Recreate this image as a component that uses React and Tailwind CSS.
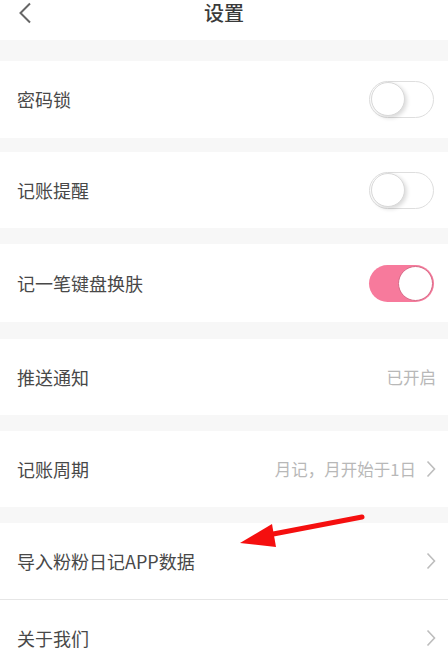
import React from 'react';

const font = { fontFamily: '"Noto Sans CJK SC", "Noto Sans", sans-serif' };

function Toggle({ on }) {
  if (on) {
    return (
      <div className="w-[65px] h-[37px] rounded-full bg-[#f77a9c] relative mr-[2px]">
        <div className="absolute right-[1px] top-[1px] w-[35px] h-[35px] rounded-full bg-white border border-[#d66a87]" />
      </div>
    );
  }
  return (
    <div className="w-[65px] h-[37px] rounded-full bg-white border border-[#dedede] relative mr-[2px]">
      <div className="absolute left-[1px] top-[0px] w-[34px] h-[34px] rounded-full bg-white border border-[#d9d9d9] shadow-[2px_2px_4px_rgba(0,0,0,0.15)]" />
    </div>
  );
}

function Chevron() {
  return (
    <svg width="10" height="18" viewBox="0 0 10 18" className="ml-[10px]">
      <path d="M1.5 1.5 L8.5 9 L1.5 16.5" fill="none" stroke="#bdbdbd" strokeWidth="1.6" />
    </svg>
  );
}

function Row({ label, right, h, border }) {
  return (
    <div className={`flex items-center justify-between bg-white pl-[17px] pr-[12px] ${h} ${border ? 'border-b border-[#e6e6e6]' : ''}`}>
      <span className="text-[18px] text-[#484848]">{label}</span>
      <div className="flex items-center">{right}</div>
    </div>
  );
}

const Gap = ({ h }) => <div className={`bg-[#f7f7f7] ${h}`} />;

export default function App() {
  return (
    <div className="w-[448px] h-[670px] overflow-hidden bg-white relative" style={font}>
      <div className="h-[40px] bg-white relative pt-[1px]">
        <svg width="14" height="22" viewBox="0 0 14 22" className="absolute left-[18px] top-[2px]">
          <path d="M12 1.5 L2.5 11 L12 20.5" fill="none" stroke="#666" strokeWidth="2" />
        </svg>
        <div className="text-center text-[20px] leading-[24px] font-medium text-[#3a3a3a]">设置</div>
      </div>
      <Gap h="h-[21px]" />
      <Row label="密码锁" h="h-[77px]" right={<Toggle />} />
      <Gap h="h-[14px]" />
      <Row label="记账提醒" h="h-[76px]" right={<Toggle />} />
      <Gap h="h-[16px]" />
      <Row label="记一笔键盘换肤" h="h-[78px]" right={<Toggle on />} />
      <Gap h="h-[17px]" />
      <Row label="推送通知" h="h-[76px]" right={<span className="text-[16.5px] text-[#b8b8b8]">已开启</span>} />
      <Gap h="h-[16px]" />
      <Row
        label="记账周期"
        h="h-[76px]"
        right={
          <>
            <span className="text-[16.5px] text-[#b8b8b8]">月记，月开始于1日</span>
            <Chevron />
          </>
        }
      />
      <Gap h="h-[16px]" />
      <Row label="导入粉粉日记APP数据" h="h-[77px]" border right={<Chevron />} />
      <Row label="关于我们" h="h-[76px]" right={<Chevron />} />

      <svg width="448" height="670" className="absolute left-0 top-0 pointer-events-none">
        <line x1="362" y1="517" x2="268" y2="535" stroke="#f50f0f" strokeWidth="5" strokeLinecap="round" />
        <polygon points="240,543 272,524 276,547" fill="#f50f0f" />
      </svg>
    </div>
  );
}
